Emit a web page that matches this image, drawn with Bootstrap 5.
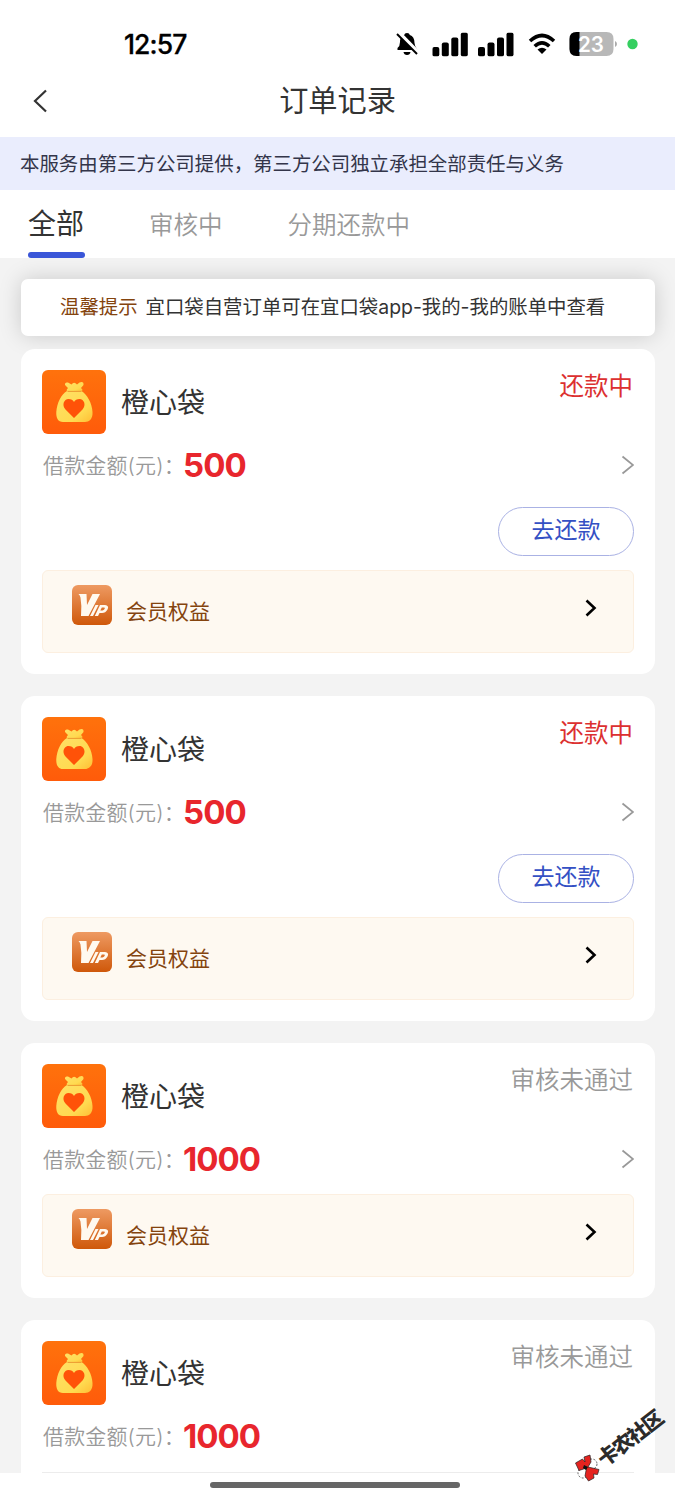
<!DOCTYPE html>
<html lang="zh-CN">
<head>
<meta charset="utf-8">
<meta name="viewport" content="width=device-width, initial-scale=1">
<title>订单记录</title>
<link rel="stylesheet" href="https://cdn.jsdelivr.net/npm/bootstrap@5.3.0/dist/css/bootstrap.min.css">
<style>
  body { font-family: Inter, "Noto Sans CJK SC", sans-serif; color: #333; background: #fff; line-height: 1; }
  .screen { width: 675px; height: 1500px; }
  .status-bar { height: 67px; padding: 22px 36px 0 124px; color: #000; }
  .clock { font-size: 26.500px; font-weight: 500; width: 62px; letter-spacing: -.9px; padding-top: 9px; -webkit-text-stroke: .3px #000; }
  .title-bar { height: 70px; }
  .page-title { font-size: 29.2px; padding-top: 19px; }
  .back-arrow { left: 32px; top: 22px; }
  .banner { height: 53px; background: #eaedfd; font-size: 19.43px; padding: 2px 0 0 20px; color: #33354a; }
  .tab-row { height: 68px; font-size: 24.5px; color: #999; }
  .tab-item { height: 68px; padding-top: 23px; }
  .tab-item.current { font-size: 28px; color: #333; padding-top: 20px; width: 57px; margin-left: 28px; }
  .tab-item.current::after { content: ""; display: block; height: 6px; margin-top: 14px; border-radius: 3px; background: #3a56d8; }
  .thin { font-weight: 350; }
  .feed { height: 1215px; background: #f3f3f3; padding: 21px 20px 0 21px; }
  .notice { height: 57px; border-radius: 7px; font-size: 19.4px; padding-left: 39px; margin-bottom: 13px; box-shadow: 0 0 22px rgba(0,0,0,.17); }
  .brown { color: #84440e; }
  .order { border-radius: 14px; padding: 21px; margin-bottom: 22px; }
  .order.cut { height: 153px; border-radius: 14px 14px 0 0; padding-bottom: 0; }
  .brand-name { font-size: 28px; margin-left: 15px; padding-top: 2px; }
  .state { font-size: 24.5px; margin: 4px 1px 0 0; }
  .due { color: #dc3030; }
  .muted { color: #999; }
  .amount-row { height: 62px; font-size: 21px; }
  .amount-label { width: 141px; padding-left: 1px; letter-spacing: .15px; }
  .amount { font-size: 33px; font-weight: 700; color: #e8262d; letter-spacing: -1px; }
  .amount.short { letter-spacing: -.9px; }
  .pay-wrap { padding: 11px 0 14px; }
  .pay { width: 136px; height: 49px; border: 1px solid #aab2e4; color: #3450c4; font-size: 23px; padding: 0 0 2px; line-height: 1; }
  .benefits { height: 83px; border: 1px solid #fcefe0; border-radius: 6px; background: #fef9f1; padding: 14px 36px 0 29px; margin-top: 4px; }
  .pay-wrap + .benefits { margin-top: 0; }
  .benefits-label { font-size: 21px; margin: 16px 0 0 14px; }
  .benefits-arrow { margin-top: 14px; }
  .home-area { height: 27px; padding-top: 9px; }
  .home-bar { width: 250px; height: 6px; border-radius: 3px; background: #666; margin-left: 210px; }
  .cut-line { height: 1px; background: #ececec; margin-top: 5px; }
  .stamp { left: 574px; top: 1405px; }
</style>
</head>
<body>
<svg width="0" height="0" class="position-absolute">
  <defs>
    <linearGradient id="orange" x1="0" y1="0" x2="0" y2="1"><stop offset="0" stop-color="#ff720c"/><stop offset="1" stop-color="#ff5b0a"/></linearGradient>
    <linearGradient id="gold" x1="0" y1="0" x2="1" y2="1"><stop offset="0" stop-color="#ffe066"/><stop offset=".7" stop-color="#ffda50"/><stop offset="1" stop-color="#ffbe34"/></linearGradient>
    <linearGradient id="copper" x1="0" y1="0" x2="0" y2="1"><stop offset="0" stop-color="#ee9a62"/><stop offset="1" stop-color="#cf580a"/></linearGradient>
    <symbol id="bag" viewBox="0 0 64 64">
      <rect width="64" height="64" rx="6" fill="url(#orange)"/>
      <path d="M23.500 15.500C22 13.500 24 12 26 12.500L29.500 14.500Q32 11 35 14.500L37.500 12.500Q42 11 41.500 15L39 18Q42 20.500 39 21H25.500Q23.500 20.500 26 18Z" fill="url(#gold)"/>
      <path d="M25 21H39.500C45 24.500 50 33 50.500 42C51 49 47 52 43 52H21C16 52 14 48 14.300 42C15 33 19 24.500 25 21Z" fill="url(#gold)"/>
      <path d="M25.500 21.400H39.500" stroke="#ec9a30" stroke-width="1"/>
      <path d="M32 48L23.500 39.500C19.500 35 22 29 26.500 29Q30.500 29 32 32Q33.500 29 37.500 29C42 29 44.500 35 40.500 39.500Z" fill="#ff5208"/>
    </symbol>
    <symbol id="vip" viewBox="0 0 40 40">
      <rect width="40" height="40" rx="6" fill="url(#copper)"/>
      <path d="M6.500 9H14.500L15 20L20.500 9H28L16.500 31H9Q10 21 8.500 12.500Q8 10 6.500 9Z" fill="#fff9ef"/>
      <path d="M23.500 20H26.500L21 31H18ZM28 20H33Q37.500 20.500 35.500 24.500Q33.500 28 30 28H27.500L26 31H22.800ZM29.800 22.500L28.300 25.500H30.500Q32.300 25 32.800 23.500Q33 22.500 32 22.500Z" fill="#fff9ef" fill-rule="evenodd"/>
    </symbol>
    <symbol id="bars" viewBox="0 0 36 24">
      <rect x="0" y="14.500" width="7" height="9.500" rx="2"/><rect x="9.500" y="10" width="7" height="14" rx="2"/><rect x="19" y="5" width="7" height="19" rx="2"/><rect x="28.500" y="0" width="7" height="24" rx="2"/>
    </symbol>
    <symbol id="next" viewBox="0 0 14 20"><path d="M2.500 1.500L13 10L2.500 18.500" fill="none" stroke="#999" stroke-width="1.800"/></symbol>
    <symbol id="next-bold" viewBox="0 0 12 18"><path d="M1.500 1.500L9.500 9L1.500 16.500" fill="none" stroke="#000" stroke-width="2.600"/></symbol>
  </defs>
</svg>

<div class="screen position-relative overflow-hidden">
  <header>
    <div class="status-bar d-flex align-items-start">
      <div class="clock text-nowrap">12:57</div>
      <svg class="ms-auto" width="245" height="44" viewBox="394.500 22 245 44">
        <path d="M407.500 33Q410 33 410.300 35Q415 36.500 415 43Q415 46 418 50H398V48Q400.500 46 400.500 42Q400.500 36.500 404.700 35Q405 33 407.500 33Z"/>
        <path d="M404 52H411Q410.500 55 407.500 55Q404.500 55 404 52Z"/>
        <path d="M399 32.500L419 53" stroke="#fff" stroke-width="4"/>
        <path d="M397.500 34L417.500 54" stroke="#000" stroke-width="2"/>
        <use href="#bars" x="432.800" y="32.500" width="36" height="24"/>
        <use href="#bars" x="478.500" y="32.500" width="36" height="24"/>
        <path d="M530.500 41Q542.500 30 554.500 41M535.200 46.300Q542.500 39.500 549.800 46.300" fill="none" stroke="#000" stroke-width="3.600"/>
        <path d="M538 49.500Q542.500 46 547 49.500L542.500 54Z"/>
        <path d="M577 32H607Q614 32 614 39V49Q614 56 607 56H577Q570 56 570 49V39Q570 32 577 32Z" fill="#b8b8b8"/>
        <path d="M580 32H577Q570 32 570 39V49Q570 56 577 56H580Z"/>
        <path d="M615.500 41Q617.500 42 617.500 44T615.500 47Z" fill="#aaa"/>
        <text x="578.500" y="51.500" font-size="21" font-weight="600" fill="#fff" textLength="26" lengthAdjust="spacingAndGlyphs">23</text>
        <circle cx="633" cy="44" r="5.200" fill="#35cf60"/>
      </svg>
    </div>
    <div class="title-bar position-relative text-center">
      <svg class="back-arrow position-absolute" width="16" height="24" viewBox="0 0 16 24"><path d="M14 1.500L3 12L14 22.500" fill="none" stroke="#333" stroke-width="2.200"/></svg>
      <h1 class="page-title fw-normal mb-0 lh-1">订单记录</h1>
    </div>
  </header>
  <div class="banner d-flex align-items-center text-nowrap">本服务由第三方公司提供，第三方公司独立承担全部责任与义务</div>
  <nav class="tab-row d-flex text-nowrap">
    <div class="tab-item current">全部</div>
    <div class="tab-item thin" style="margin-left:64px">审核中</div>
    <div class="tab-item thin" style="margin-left:65px">分期还款中</div>
  </nav>

  <main class="feed overflow-hidden">
    <div class="notice bg-white d-flex align-items-center text-nowrap"><span class="brown me-2">温馨提示</span><span>宜口袋自营订单可在宜口袋app-我的-我的账单中查看</span></div>

    <section class="order bg-white">
      <div class="d-flex">
        <svg width="64" height="64"><use href="#bag"/></svg>
        <div class="brand-name align-self-center">橙心袋</div>
        <div class="state due ms-auto">还款中</div>
      </div>
      <div class="amount-row d-flex align-items-center"><span class="amount-label muted thin text-nowrap">借款金额(元)：</span><span class="amount short">500</span><svg class="ms-auto" width="14" height="20"><use href="#next"/></svg></div>
      <div class="pay-wrap"><button class="btn pay rounded-pill d-block ms-auto">去还款</button></div>
      <div class="benefits d-flex brown">
        <svg width="40" height="40"><use href="#vip"/></svg><span class="benefits-label">会员权益</span>
        <svg class="benefits-arrow ms-auto" width="12" height="18"><use href="#next-bold"/></svg>
      </div>
    </section>

    <section class="order bg-white">
      <div class="d-flex">
        <svg width="64" height="64"><use href="#bag"/></svg>
        <div class="brand-name align-self-center">橙心袋</div>
        <div class="state due ms-auto">还款中</div>
      </div>
      <div class="amount-row d-flex align-items-center"><span class="amount-label muted thin text-nowrap">借款金额(元)：</span><span class="amount short">500</span><svg class="ms-auto" width="14" height="20"><use href="#next"/></svg></div>
      <div class="pay-wrap"><button class="btn pay rounded-pill d-block ms-auto">去还款</button></div>
      <div class="benefits d-flex brown">
        <svg width="40" height="40"><use href="#vip"/></svg><span class="benefits-label">会员权益</span>
        <svg class="benefits-arrow ms-auto" width="12" height="18"><use href="#next-bold"/></svg>
      </div>
    </section>

    <section class="order bg-white">
      <div class="d-flex">
        <svg width="64" height="64"><use href="#bag"/></svg>
        <div class="brand-name align-self-center">橙心袋</div>
        <div class="state muted thin ms-auto">审核未通过</div>
      </div>
      <div class="amount-row d-flex align-items-center"><span class="amount-label muted thin text-nowrap">借款金额(元)：</span><span class="amount">1000</span><svg class="ms-auto" width="14" height="20"><use href="#next"/></svg></div>
      <div class="benefits d-flex brown">
        <svg width="40" height="40"><use href="#vip"/></svg><span class="benefits-label">会员权益</span>
        <svg class="benefits-arrow ms-auto" width="12" height="18"><use href="#next-bold"/></svg>
      </div>
    </section>

    <section class="order cut bg-white">
      <div class="d-flex">
        <svg width="64" height="64"><use href="#bag"/></svg>
        <div class="brand-name align-self-center">橙心袋</div>
        <div class="state muted thin ms-auto">审核未通过</div>
      </div>
      <div class="amount-row d-flex align-items-center"><span class="amount-label muted thin text-nowrap">借款金额(元)：</span><span class="amount">1000</span></div>
      <div class="cut-line"></div>
    </section>
  </main>
  <footer class="home-area bg-white"><div class="home-bar"></div></footer>

  <svg class="stamp position-absolute" width="101" height="80" viewBox="574 1405 101 80">
    <g stroke="#222" stroke-width=".7">
      <circle cx="592" cy="1464" r="5" fill="#fff" stroke-dasharray="2 1.500"/><circle cx="583" cy="1473" r="5" fill="#fff" stroke-dasharray="2 1.500"/>
      <path d="M575.500 1463L582.500 1459L585 1462L584 1457L590 1455L591 1462L588 1467L599 1469.500L597.500 1474.500L593.500 1474L594 1478L588.500 1481L585 1476L586.500 1468L579 1470.500Z" fill="#e5231f"/>
    </g>
    <path d="M584 1465L588 1467L586 1470L583 1468Z" fill="#111"/>
    <text transform="translate(604.500 1467.500) rotate(-37.500)" font-size="20.500" font-weight="900" fill="#2b2b2b" textLength="77">卡农社区</text>
  </svg>
</div>
<script src="https://cdn.jsdelivr.net/npm/bootstrap@5.3.0/dist/js/bootstrap.bundle.min.js"></script>
</body>
</html>
